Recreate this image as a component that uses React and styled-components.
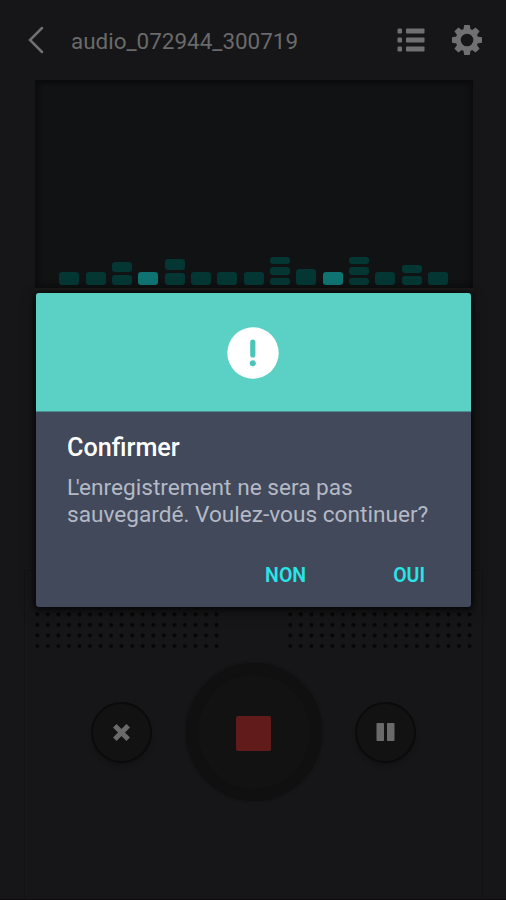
import React from "react";
import styled, { createGlobalStyle } from "styled-components";

const GlobalStyle = createGlobalStyle`
  * { box-sizing: border-box; }
  body {
    margin: 0;
    background: #161618;
    font-family: Roboto, "Liberation Sans", sans-serif;
  }
  button {
    font: inherit;
    border: 0;
    padding: 0;
    margin: 0;
    background: none;
    cursor: pointer;
  }
  svg { display: block; }
`;

const Screen = styled.main`
  position: relative;
  display: flex;
  flex-direction: column;
  width: 506px;
  height: 900px;
  overflow: hidden;
  background: #161618;
  border-bottom: 1px solid #100a10;
`;

const TopBar = styled.header`
  display: flex;
  align-items: center;
  flex: none;
  height: 80px;
  padding: 0 24px 0 28px;
`;

const IconButton = styled.button`
  color: #707070;
`;

const FileName = styled.h1`
  flex: 1;
  margin: 1px 0 0 27px;
  font-size: 22.45px;
  font-weight: 400;
  line-height: 28px;
  color: #6a6a6b;
  white-space: nowrap;
`;

const TopActions = styled.div`
  display: flex;
  align-items: center;
  gap: 27px;
`;

const Display = styled.section`
  display: flex;
  flex: none;
  align-items: flex-end;
  gap: 6.33px;
  width: 438px;
  height: 208px;
  margin: 0 0 0 35px;
  padding: 0 0 3px 24.4px;
  background: #101213;
  box-shadow: inset 0 3px 3px #0c0c0d, inset 4px 0 4px #0e0e0f,
    inset -4px 0 4px #0e0e0f, 0 2px 1px #1b1919;
`;

const Column = styled.div`
  display: flex;
  flex-direction: column;
  gap: ${(p) => p.$gap}px;
  width: 20px;
`;

const Segment = styled.span`
  height: ${(p) => p.$height}px;
  border-radius: 3px;
  background: ${(p) => (p.$lit ? "#0f7371" : "#043733")};
`;

const Deck = styled.section`
  flex: 1;
  width: 459px;
  margin: 282px 0 0 24px;
  border: 1px solid #121213;
  border-bottom: 0;
  padding: 41px 9px 0 10px;
`;

const Grilles = styled.div`
  display: flex;
  gap: 65px;
`;

const Grille = styled.div`
  flex: none;
  width: 188px;
  height: 37px;
  background-image: radial-gradient(circle, #060607 1.5px, transparent 2.4px);
  background-size: 10.56px 10.6px;
  background-position: -3px -3px;
`;

const Controls = styled.div`
  display: flex;
  align-items: center;
  justify-content: space-between;
  margin: 14px 57px 0 56px;
`;

const RoundButton = styled.button`
  display: grid;
  place-items: center;
  width: 61px;
  height: 61px;
  border: 2px solid #0b0b0c;
  border-radius: 50%;
  color: #6a6a6a;
  background: #121213;
  box-shadow: 0 4px 4px rgba(0, 0, 0, 0.15);
`;

const StopButton = styled.button`
  display: grid;
  place-items: center;
  width: 136px;
  height: 138px;
  border: 12px solid #101011;
  border-radius: 50%;
  background: #121213;
  box-shadow: 0 0 3px #101011;
`;

const StopMark = styled.span`
  width: 35px;
  height: 35px;
  margin: 3px 1px 0 0;
  border-radius: 2px;
  background: #611b1b;
`;

const Dialog = styled.div`
  position: absolute;
  left: 36px;
  top: 293px;
  display: flex;
  flex-direction: column;
  width: 435px;
  height: 314px;
  overflow: hidden;
  border-radius: 3px;
  background: #41495b;
  box-shadow: 0 1px 5px 1px #060607, 0 4px 16px rgba(0, 0, 0, 0.35);
`;

const Banner = styled.div`
  display: grid;
  place-items: center;
  flex: none;
  height: 119px;
  padding: 2px 2px 0 0;
  background: #5bd0c5;
  border-bottom: 1px solid #4c8f94;
`;

const DialogTitle = styled.h2`
  margin: 21px 0 0 31px;
  font-size: 25.2px;
  font-weight: 500;
  line-height: 30px;
  color: #fff;
`;

const Message = styled.p`
  margin: 12px 0 0 31px;
  font-size: 22.64px;
  line-height: 26.5px;
  color: #b4b9c5;
  white-space: nowrap;
`;

const Elision = styled.span`
  letter-spacing: -3.4px;
`;

const DialogActions = styled.div`
  display: flex;
  justify-content: flex-end;
  gap: 87px;
  margin: 36px 46px 0 0;
`;

const TextButton = styled.button`
  font-size: 19.5px;
  font-weight: 600;
  line-height: 24px;
  color: #28e5e6;
`;

const BackIcon = () => (
  <svg width="16" height="28" viewBox="0 0 16 28">
    <path d="M14 2 L2 14 L14 26" fill="none" stroke="currentColor" strokeWidth="2.5" strokeLinecap="round" />
  </svg>
);

const ListIcon = () => (
  <svg width="28" height="24" viewBox="0 0 28 24" fill="currentColor">
    {[0, 9, 18].map((y) => (
      <g key={y}>
        <rect x="0.5" y={y + 0.5} width="4.5" height="5" rx="1.2" />
        <rect x="9" y={y + 0.5} width="18.5" height="5" rx="0.8" />
      </g>
    ))}
  </svg>
);

const GearIcon = () => (
  <svg width="30" height="30" viewBox="-15 -15 30 30">
    <circle r="8.8" fill="none" stroke="currentColor" strokeWidth="5" />
    {[0, 45, 90, 135, 180, 225, 270, 315].map((a) => (
      <path key={a} transform={`rotate(${a})`} d="M-3.6 -10 L-2.8 -15 H2.8 L3.6 -10 Z" fill="currentColor" />
    ))}
  </svg>
);

const AlertIcon = () => (
  <svg width="52" height="52" viewBox="0 0 52 52">
    <circle cx="26" cy="26" r="25.7" fill="#fff" />
    <rect x="23.2" y="12.5" width="5.2" height="18" rx="2.6" fill="#4cc4ba" />
    <circle cx="25.8" cy="36.3" r="3" fill="#4cc4ba" />
  </svg>
);

const CloseIcon = () => (
  <svg width="20" height="20" viewBox="0 0 20 20">
    <path d="M2.8 3.8 L16.2 17.2 M16.2 3.8 L2.8 17.2" stroke="currentColor" strokeWidth="5" />
  </svg>
);

const PauseIcon = () => (
  <svg width="20" height="18" viewBox="0 0 20 18" fill="currentColor">
    <rect x="0.5" width="7.5" height="18" rx="0.8" />
    <rect x="11" width="7.5" height="18" rx="0.8" />
  </svg>
);

const levels = [
  { segments: [13.5] },
  { segments: [13.5] },
  { segments: [9.5, 10.5], gap: 3 },
  { segments: [13.5], lit: true },
  { segments: [11.5, 12.5], gap: 2.5 },
  { segments: [13.5] },
  { segments: [13.5] },
  { segments: [13.5] },
  { segments: [7.5, 7.5, 7.5], gap: 3 },
  { segments: [16] },
  { segments: [13.5], lit: true },
  { segments: [7.5, 7.5, 7.5], gap: 3 },
  { segments: [13.5] },
  { segments: [8.5, 9], gap: 3 },
  { segments: [13.5] },
];

export default function App() {
  return (
    <>
      <GlobalStyle />
      <Screen>
        <TopBar>
          <IconButton aria-label="Retour"><BackIcon /></IconButton>
          <FileName>audio_072944_300719</FileName>
          <TopActions>
            <IconButton aria-label="Liste"><ListIcon /></IconButton>
            <IconButton aria-label="Paramètres"><GearIcon /></IconButton>
          </TopActions>
        </TopBar>
        <Display>
          {levels.map((level, i) => (
            <Column key={i} $gap={level.gap || 0}>
              {level.segments.map((height, j) => (
                <Segment key={j} $height={height} $lit={level.lit} />
              ))}
            </Column>
          ))}
        </Display>
        <Deck>
          <Grilles>
            <Grille />
            <Grille />
          </Grilles>
          <Controls>
            <RoundButton aria-label="Annuler"><CloseIcon /></RoundButton>
            <StopButton aria-label="Arrêter"><StopMark /></StopButton>
            <RoundButton aria-label="Pause"><PauseIcon /></RoundButton>
          </Controls>
        </Deck>
        <Dialog role="dialog">
          <Banner><AlertIcon /></Banner>
          <DialogTitle>Confirmer</DialogTitle>
          <Message>
            <Elision>L</Elision>'enregistrement ne sera pas<br />
            sauvegardé. Voulez-vous continuer?
          </Message>
          <DialogActions>
            <TextButton>NON</TextButton>
            <TextButton>OUI</TextButton>
          </DialogActions>
        </Dialog>
      </Screen>
    </>
  );
}
